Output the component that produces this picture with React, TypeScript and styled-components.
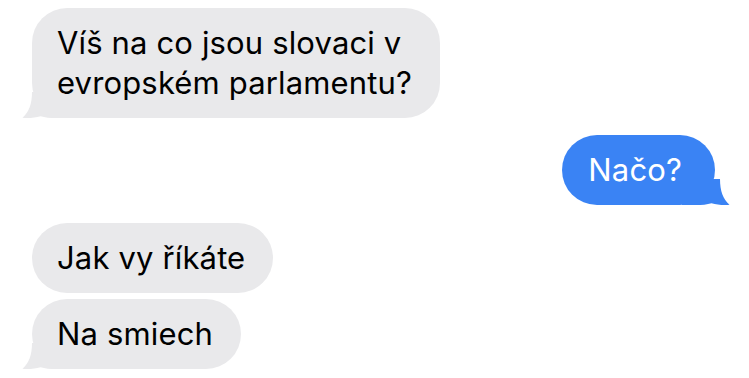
import React from 'react'
import styled, { createGlobalStyle } from 'styled-components'

type Side = 'in' | 'out'

type IMessage = {
  id: string;
  side: Side;
  text: string[];
  tail: boolean;
  gapBefore: number;
}

const messages: IMessage[] = [
  { id: 'm1', side: 'in', text: ['Víš na co jsou slovaci v', 'evropském parlamentu?'], tail: true, gapBefore: 0 },
  { id: 'm2', side: 'out', text: ['Načo?'], tail: true, gapBefore: 17 },
  { id: 'm3', side: 'in', text: ['Jak vy říkáte'], tail: false, gapBefore: 18 },
  { id: 'm4', side: 'in', text: ['Na smiech'], tail: true, gapBefore: 6 },
]

const GlobalStyle = createGlobalStyle`
  html, body {
    margin: 0;
    padding: 0;
    background: #ffffff;
  }
  body {
    font-family: Inter, "Noto Sans", "Liberation Sans", sans-serif;
    -webkit-font-smoothing: antialiased;
  }
`

const Thread = styled.div`
  width: 749px;
  height: 378px;
  box-sizing: border-box;
  padding: 8px 34px 0 32px;
  display: flex;
  flex-direction: column;
  overflow: hidden;
`

const Row = styled.div<{ $side: Side; $gap: number }>`
  display: flex;
  justify-content: ${p => (p.$side === 'out' ? 'flex-end' : 'flex-start')};
  margin-top: ${p => p.$gap}px;
`

const Bubble = styled.div<{ $side: Side }>`
  position: relative;
  padding: ${p => (p.$side === 'out' ? '15px 33px 15px 26px' : '15px 28px 15px 25px')};
  border-radius: 35px;
  background: ${p => (p.$side === 'out' ? '#3a83f4' : '#e9e9eb')};
  color: ${p => (p.$side === 'out' ? '#ffffff' : '#000000')};
  font-size: 31px;
  line-height: 40px;
  letter-spacing: 0.15px;
  white-space: nowrap;
`

const Line = styled.div`
  position: relative;
`

const TailSvg = styled.svg<{ $side: Side }>`
  position: absolute;
  bottom: 0;
  width: 48px;
  height: 26px;
  ${p => (p.$side === 'out' ? 'right: -15px; transform: scaleX(-1);' : 'left: -10px;')}
`

const Tail: React.FC<{ side: Side }> = ({ side }) => (
  <TailSvg $side={side} viewBox="0 0 48 26">
    <path
      d="M10 0 C10 12 7 20 0.5 25.8 C7 26.4 13 25.6 18.5 24.2 C23 25.6 28 26 34 26 L48 26 L48 0 Z"
      fill={side === 'out' ? '#3a83f4' : '#e9e9eb'}
    />
  </TailSvg>
)

const App: React.FC = () => {
  return (
    <>
      <GlobalStyle />
      <Thread>
        {messages.map(m => (
          <Row key={m.id} $side={m.side} $gap={m.gapBefore}>
            <Bubble $side={m.side}>
              {m.tail && <Tail side={m.side} />}
              {m.text.map((t, idx) => (
                <Line key={idx}>{t}</Line>
              ))}
            </Bubble>
          </Row>
        ))}
      </Thread>
    </>
  )
}

export default App
